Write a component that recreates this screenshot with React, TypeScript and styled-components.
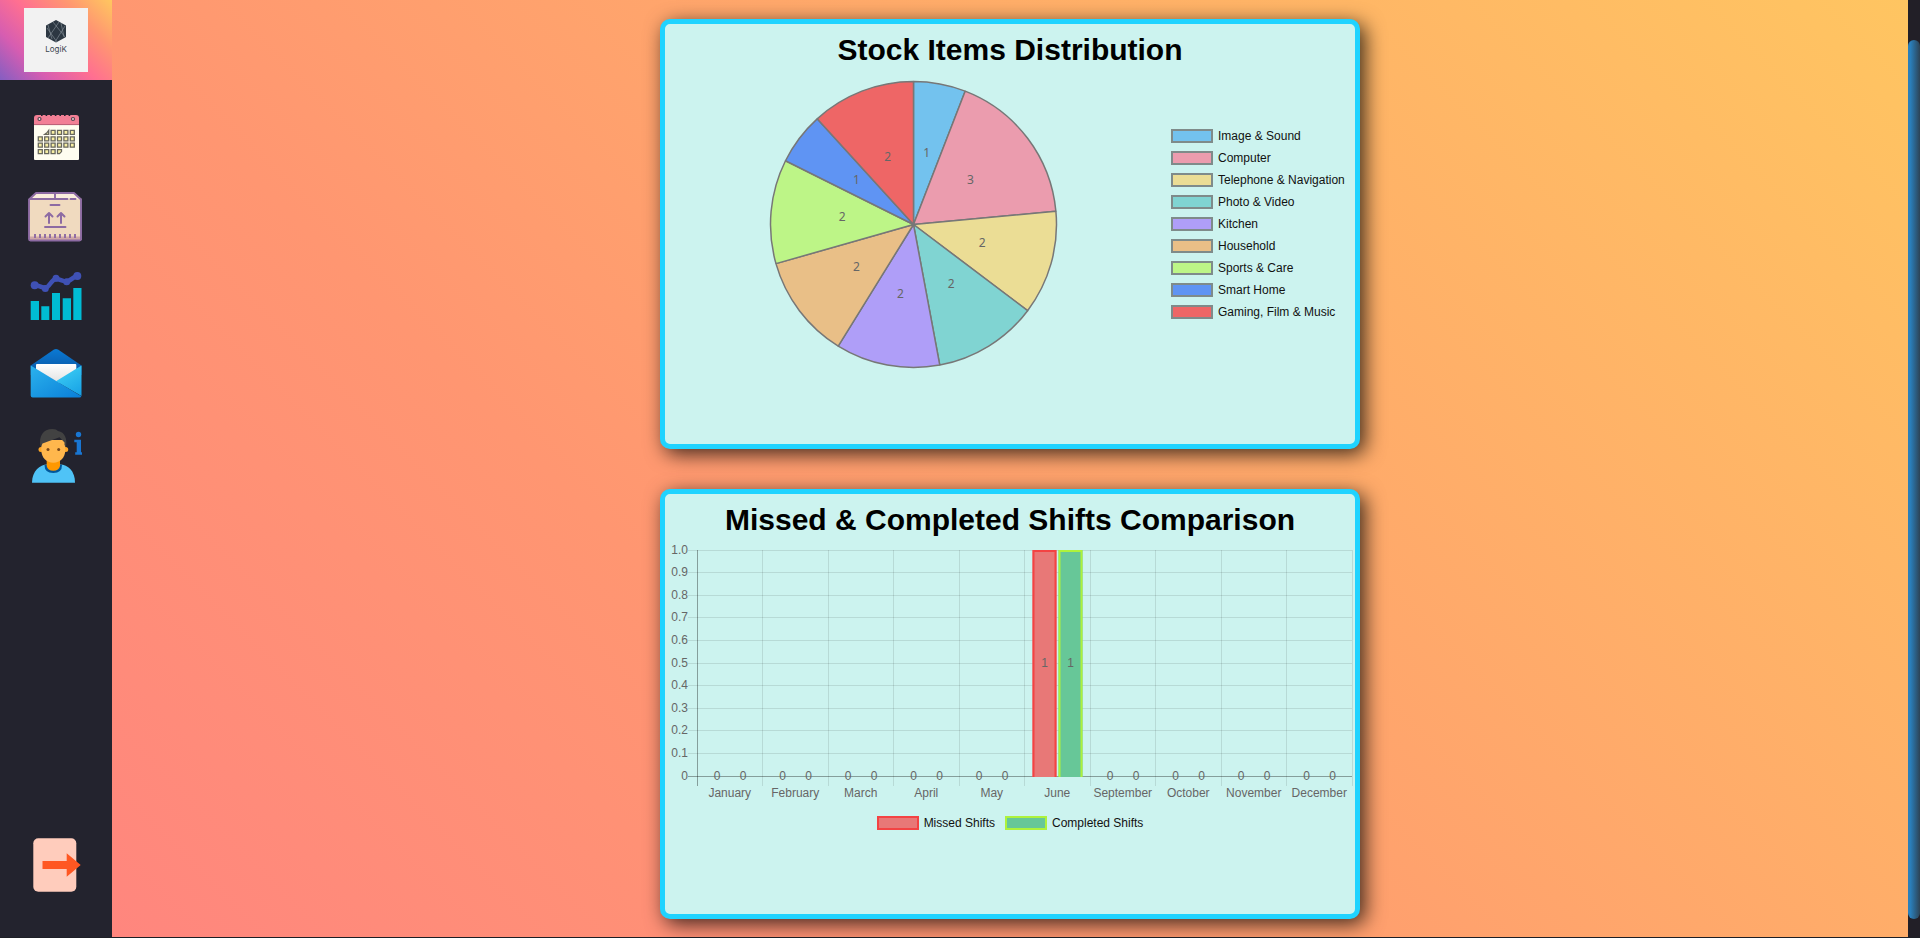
import React from "react";
import styled, { createGlobalStyle } from "styled-components";

const GlobalStyle = createGlobalStyle`
  * { box-sizing: border-box; }
  body {
    margin: 0;
    background: #23232e;
    font-family: "Liberation Sans", Arial, sans-serif;
  }
`;

const Page = styled.div`
  display: flex;
  height: 100vh;
  border-bottom: 1px solid #1d1f26;
`;

const Sidebar = styled.nav`
  display: flex;
  flex-direction: column;
  flex: none;
  width: 112px;
  background: #23232e;
`;

const LogoLink = styled.a`
  display: flex;
  align-items: center;
  justify-content: center;
  height: 80px;
  text-decoration: none;
  background: linear-gradient(45deg, #845ec2, #d65db1, #ff6f91, #ff9671, #ffc75f);
`;

const LogoTile = styled.span`
  display: flex;
  flex-direction: column;
  align-items: center;
  width: 64px;
  height: 64px;
  padding-top: 12px;
  background: #f2f2f2;
  color: #3a444e;
  font-family: Inter, sans-serif;
  font-size: 8px;
  line-height: 12px;
`;

const NavList = styled.ul`
  display: flex;
  flex: 1;
  flex-direction: column;
  gap: 16px;
  margin: 0;
  padding: 25px 0 40px;
  list-style: none;
`;

const NavItem = styled.li<{ $last?: boolean }>`
  margin-top: ${(p) => (p.$last ? "auto" : "0")};
`;

const NavLink = styled.a`
  display: flex;
  justify-content: center;
`;

const Main = styled.main`
  display: flex;
  flex: 1;
  flex-direction: column;
  align-items: center;
  gap: 40px;
  min-width: 0;
  padding: 19px 16px 0;
  overflow: hidden;
  background: linear-gradient(45deg, #ff867e 0%, #ff9671 33%, #ffc561 100%);
`;

const Card = styled.section`
  display: flex;
  flex: none;
  flex-direction: column;
  width: 100%;
  max-width: 700px;
  min-height: 430px;
  border: 5px solid #1fd3ff;
  border-radius: 10px;
  background: #ccf3ef;
  box-shadow: 5px 5px 20px rgba(0, 0, 0, 0.75);
`;

const Title = styled.h1`
  margin: 0;
  font-size: 30px;
  line-height: 52px;
  text-align: center;
`;

const ChartRow = styled.div`
  display: flex;
`;

const Chart = styled.svg`
  display: block;
  flex: 1;
  min-width: 0;
  overflow: visible;
  font-size: 12px;
  fill: #666;
  text-anchor: middle;
`;

const Legend = styled.ul<{ $row?: boolean }>`
  display: flex;
  flex: none;
  flex-direction: ${(p) => (p.$row ? "row" : "column")};
  justify-content: ${(p) => (p.$row ? "center" : "flex-start")};
  gap: ${(p) => (p.$row ? "10px" : "8px")};
  width: ${(p) => (p.$row ? "100%" : "200px")};
  margin: 0;
  padding: ${(p) => (p.$row ? "12px 0 0" : "53px 0 0 16px")};
  list-style: none;
`;

const LegendItem = styled.li`
  display: flex;
  align-items: center;
  gap: 5px;
  color: #111;
  font-size: 12px;
  line-height: 14px;
`;

const Swatch = styled.span<{ $fill: string; $line: string }>`
  width: 42px;
  height: 14px;
  border: 2px solid ${(p) => p.$line};
  background: ${(p) => p.$fill};
`;

const ScrollRail = styled.div`
  flex: none;
  width: 12px;
  padding: 40px 0 18px;
  background: #221f27;
`;

const ScrollThumb = styled.div`
  height: 100%;
  border-radius: 6px;
  background: linear-gradient(90deg, #2a7fbb 20%, #2d4355);
`;

const slices = [
  { label: "Image & Sound", value: 1, color: "#73c2ee" },
  { label: "Computer", value: 3, color: "#eb9cae" },
  { label: "Telephone & Navigation", value: 2, color: "#ebdd95" },
  { label: "Photo & Video", value: 2, color: "#80d4d2" },
  { label: "Kitchen", value: 2, color: "#af9ef8" },
  { label: "Household", value: 2, color: "#e9bf87" },
  { label: "Sports & Care", value: 2, color: "#bdf587" },
  { label: "Smart Home", value: 1, color: "#5f94f3" },
  { label: "Gaming, Film & Music", value: 2, color: "#ee6666" },
];

const months = [
  "January", "February", "March", "April", "May",
  "June", "September", "October", "November", "December",
];

const series = [
  { label: "Missed Shifts", color: "#e87877", line: "#f34343", data: [0, 0, 0, 0, 0, 1, 0, 0, 0, 0] },
  { label: "Completed Shifts", color: "#67c798", line: "#aef23c", data: [0, 0, 0, 0, 0, 1, 0, 0, 0, 0] },
];

function PieChart() {
  const cx = 248.5;
  const cy = 148.5;
  const r = 143;
  const total = slices.reduce((sum, s) => sum + s.value, 0);
  const at = (turn: number, radius: number) => {
    const a = turn * 2 * Math.PI;
    return [cx + radius * Math.sin(a), cy - radius * Math.cos(a)];
  };
  let seen = 0;
  const parts = slices.map((s) => {
    const from = seen / total;
    seen += s.value;
    const to = seen / total;
    return { ...s, start: at(from, r), end: at(to, r), mid: at((from + to) / 2, r / 2) };
  });
  return (
    <Chart viewBox="0 0 490 310" role="img" aria-label="Stock items by category">
      {parts.map((p) => (
        <path
          key={p.label}
          d={`M${cx} ${cy}L${p.start.join(" ")}A${r} ${r} 0 0 1 ${p.end.join(" ")}Z`}
          fill={p.color}
          stroke="#777"
          strokeWidth="1.5"
          strokeLinejoin="bevel"
        />
      ))}
      {parts.map((p) => (
        <text key={p.label} x={p.mid[0]} y={p.mid[1] + 3} fontFamily="Noto Sans, sans-serif">{p.value}</text>
      ))}
    </Chart>
  );
}

function BarChart() {
  const left = 32;
  const top = 4;
  const bottom = 230;
  const step = 65.5;
  const right = left + step * months.length;
  const ticks = Array.from({ length: 11 }, (_, i) => i);
  const rowY = (i: number) => Math.floor(top + ((bottom - top) * i) / 10) + 0.5;
  const colX = (i: number) => Math.floor(left + step * i) + 0.5;
  const tickText = (i: number) => (i === 10 ? "0" : ((10 - i) / 10).toFixed(1));
  return (
    <Chart viewBox="0 0 690 258" role="img" aria-label="Missed and completed shifts per month">
      {ticks.map((i) => (
        <g key={i}>
          <line x1={left - 9} x2={right} y1={rowY(i)} y2={rowY(i)} stroke={i === 10 ? "rgba(0,0,0,.35)" : "rgba(0,0,0,.1)"} />
          <text x={left - 9} y={rowY(i) + 3} textAnchor="end">{tickText(i)}</text>
          <line x1={colX(i)} x2={colX(i)} y1={top} y2={bottom + 10} stroke={i === 0 ? "rgba(0,0,0,.35)" : "rgba(0,0,0,.1)"} />
        </g>
      ))}
      {months.map((month, i) => (
        <text key={month} x={left + step * (i + 0.5)} y={bottom + 21}>{month}</text>
      ))}
      {series.map((s, n) =>
        s.data.map((value, i) => {
          const x = left + step * i + 20 + n * 26;
          const y = bottom - value * (bottom - top);
          return (
            <g key={`${s.label}-${i}`}>
              {value > 0 && (
                <>
                  <rect x={x - 12} y={y} width="24" height={bottom - y + 1} fill={s.color} />
                  <path d={`M${x - 11} ${bottom + 1}V${y + 1}H${x + 11}V${bottom + 1}`} fill="none" stroke={s.line} strokeWidth="2" />
                </>
              )}
              <text x={x} y={(y + bottom) / 2 + 4}>{value}</text>
            </g>
          );
        })
      )}
    </Chart>
  );
}

const Icon = ({ children }: { children: React.ReactNode }) => (
  <svg width="64" height="64" viewBox="0 0 64 64" aria-hidden="true">{children}</svg>
);

function CalendarIcon() {
  const cells: [number, number][] = [];
  for (let row = 0; row < 4; row++) {
    for (let col = row === 0 ? 1 : 0; col < (row === 3 ? 4 : 6); col++) cells.push([col, row]);
  }
  return (
    <Icon>
      <path d="M10 20V13q0-3 3-3H52q3 0 3 3V20Z" fill="#f27f95" />
      <path d="M10 20H55V54q0 1-1 1H11q-1 0-1-1Z" fill="#fffdf0" />
      <path d="M10 19.6H55" stroke="#b85f75" />
      <path d="M17 10.3H49" stroke="#23232e" strokeWidth="1.6" strokeDasharray="1.6 3" />
      <g fill="#f9dfe3" stroke="#53434f" strokeWidth="1.2">
        <circle cx="15.5" cy="14" r="1.5" /><circle cx="49" cy="14" r="1.5" />
      </g>
      {cells.map(([c, r]) => {
        const x = 14.3 + c * 6.4;
        const y = 25.4 + r * 6.4;
        const d = c === 1 && r === 0
          ? `M${x} ${y + 4}H${x + 4}V${y}L${x + 2.5} ${y + 2}Z`
          : c === 3 && r === 3
            ? `M${x} ${y}H${x + 4}V${y + 2}L${x + 2} ${y + 4}H${x}Z`
            : `M${x} ${y}h4v4h-4Z`;
        return <path key={`${c}-${r}`} d={d} fill="#f8efa3" stroke="#68675c" strokeWidth="1.3" />;
      })}
    </Icon>
  );
}

const BoxIcon = () => (
  <Icon>
    <path d="M5 14 12 8H50L57.5 14V55H5Z" fill="#f0dabf" />
    <path d="M5 14 12 8H50L57.5 14Z" fill="#fbeedd" />
    <path d="M5 51.5H57V55H5Z" fill="#cfa8a7" />
    <path d="M5 14.5 12 8H50L57 14.5V54q0 1.5-1.5 1.5H6.5Q5 55.5 5 54ZM6 14H43.5M46.5 14H51.5M31 8V14M26.5 20H35.5M21 42H41.5" fill="none" stroke="#8d6ba3" strokeWidth="1.9" strokeLinecap="round" strokeLinejoin="round" />
    <path d="M25 38V28M21.5 31.5 25 28 28.5 31.5M37 38V28M33.5 31.5 37 28 40.5 31.5" fill="none" stroke="#8d6ba3" strokeWidth="2" strokeLinecap="round" strokeLinejoin="round" />
    <path d="M11 49v4m5-4v4m5-4v4m5-4v4m5-4v4m5-4v4m5-4v4m5-4v4m5-4v4" stroke="#8d6ba3" strokeWidth="1.9" />
  </Icon>
);

const StatsIcon = () => (
  <Icon>
    <path d="M6.7 36H15V55H6.7ZM17.3 41.3H25.3V55H17.3ZM28 28H36V55H28ZM38.7 33.3H47V55H38.7ZM49.3 23H57.5V55H49.3Z" fill="#00bcd4" />
    <path d="M10.7 20.5C15 20 17 22.5 21.3 22.8 26 22 27 14.5 32 14 36 14 38 16.5 42.7 16.5 47 16 48 12 53.3 11.3" fill="none" stroke="#3f51b5" strokeWidth="4.5" strokeLinejoin="round" />
    <g fill="#3f51b5">
      <circle cx="10.7" cy="20.3" r="4" /><circle cx="21.3" cy="23.5" r="3.5" /><circle cx="32" cy="13.2" r="3.5" />
      <circle cx="42.7" cy="16.8" r="3.5" /><circle cx="53.3" cy="11" r="4" />
    </g>
  </Icon>
);

const MailIcon = () => (
  <Icon>
    <defs>
      <linearGradient id="flap" x1="0" y1="0" x2="0" y2="1"><stop stopColor="#0a7ad4" /><stop offset="0.7" stopColor="#0a5fb0" /></linearGradient>
      <linearGradient id="sheet" x1="0" y1="0" x2="0" y2="1"><stop stopColor="#fff" /><stop offset="1" stopColor="#dedede" /></linearGradient>
      <linearGradient id="front" x1="0" y1="0" x2="1" y2="1"><stop stopColor="#2bb3ed" /><stop offset="1" stopColor="#0a7ed8" /></linearGradient>
      <linearGradient id="side" x1="1" y1="1" x2="0.5" y2="0"><stop stopColor="#159fe5" /><stop offset="1" stopColor="#3bcbf3" /></linearGradient>
    </defs>
    <path d="M6.7 20.5 30 4.6q2-1.2 4 0L57.5 20.5V30H6.7Z" fill="url(#flap)" />
    <path d="M12 20q0-1 1-1H51.3q1 0 1 1V30L32 40 12 30Z" fill="url(#sheet)" />
    <path d="M57.5 20.5V51L32 36.3Z" fill="url(#side)" />
    <path d="M6.7 20.5 57.3 51.3Q57 52.5 55.5 52.5H8.7Q6.7 52.5 6.7 50.5Z" fill="url(#front)" />
  </Icon>
);

const PersonIcon = () => (
  <Icon>
    <path d="M8 57.7C8 46 16 39.5 23 39.5H36C44 39.5 51 46 51 57.7Z" fill="#4fc3f7" />
    <path d="M20.5 40Q20.5 48 29.3 48T38 40Z" fill="#01579b" />
    <path d="M22.7 34H36V41Q35 45.7 29.3 45.7T22.7 41Z" fill="#ff9800" />
    <g fill="#ffa726"><circle cx="17" cy="24.5" r="2.5" /><circle cx="41.7" cy="24.5" r="2.5" /></g>
    <path d="M17.3 15H41.3V25C41.3 33 36 37.7 29.3 37.7S17.3 33 17.3 25Z" fill="#ffb74d" />
    <path d="M16.5 22C14.5 11 19 4 28.5 4Q32.5 4 34 6C41 7 43.5 14 42 22L40.5 20V17.5L35.5 12.3 18.5 18.5 17.5 20.5Z" fill="#424242" />
    <g fill="#784719"><circle cx="24" cy="24.5" r="1.5" /><circle cx="34.7" cy="24.5" r="1.5" /></g>
    <circle cx="54.5" cy="9.5" r="2.7" fill="#1976d2" />
    <path d="M50.3 14.7H57V27.2H58V29.8H51.2V27.2H52.7V17.3H50.3Z" fill="#1976d2" />
  </Icon>
);

const LogoutIcon = () => (
  <Icon>
    <rect x="9.3" y="5.3" width="43" height="53.4" rx="5" fill="#ffccbc" />
    <path d="M18.5 28H42.7V20.3L56.7 32 42.7 43.7V36H18.5Z" fill="#ff5722" />
  </Icon>
);

const HexLogo = () => (
  <svg width="22" height="23" viewBox="0 0 22 23" aria-hidden="true">
    <path d="M11 0 21 5.5V17L11 22.5 1 17V5.5Z" fill="#2c3742" />
    <path d="M8 2 20 17M14 2 3 18M2 8 12 22M20 6 10 22M3 5 7 19M16 3 19 17" stroke="#8c969e" strokeWidth="0.6" />
  </svg>
);

const links = [
  { name: "Schedule", icon: <CalendarIcon /> },
  { name: "Stock", icon: <BoxIcon /> },
  { name: "Statistics", icon: <StatsIcon /> },
  { name: "Mail", icon: <MailIcon /> },
  { name: "Profile", icon: <PersonIcon /> },
  { name: "Log out", icon: <LogoutIcon /> },
];

export default function App() {
  return (
    <>
      <GlobalStyle />
      <Page>
        <Sidebar>
          <LogoLink href="#home">
            <LogoTile><HexLogo />LogiK</LogoTile>
          </LogoLink>
          <NavList>
            {links.map((link, i) => (
              <NavItem key={link.name} $last={i === links.length - 1}>
                <NavLink href="#" aria-label={link.name}>{link.icon}</NavLink>
              </NavItem>
            ))}
          </NavList>
        </Sidebar>
        <Main>
          <Card>
            <Title>Stock Items Distribution</Title>
            <ChartRow>
              <PieChart />
              <Legend>
                {slices.map((s) => (
                  <LegendItem key={s.label}>
                    <Swatch $fill={s.color} $line="#7f8b8a" />
                    {s.label}
                  </LegendItem>
                ))}
              </Legend>
            </ChartRow>
          </Card>
          <Card>
            <Title>Missed &amp; Completed Shifts Comparison</Title>
            <ChartRow>
              <BarChart />
            </ChartRow>
            <Legend $row>
              {series.map((s) => (
                <LegendItem key={s.label}>
                  <Swatch $fill={s.color} $line={s.line} />
                  {s.label}
                </LegendItem>
              ))}
            </Legend>
          </Card>
        </Main>
        <ScrollRail>
          <ScrollThumb />
        </ScrollRail>
      </Page>
    </>
  );
}
